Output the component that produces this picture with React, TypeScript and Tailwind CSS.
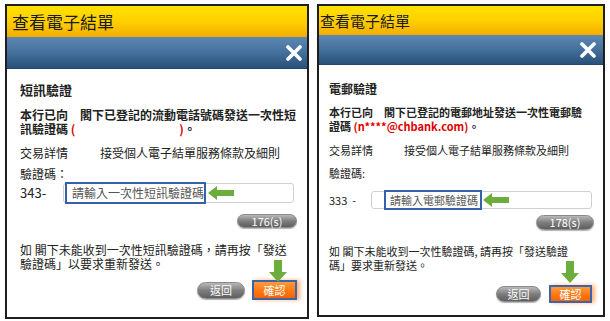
import React from "react";

const font = { fontFamily: '"Noto Sans CJK TC", "Noto Sans", sans-serif' };

function ArrowLeft({ className }: { className?: string }) {
  return (
    <svg className={className} viewBox="0 0 26 14" width="26" height="14">
      <polygon points="0,7 9,0 9,4 26,4 26,10 9,10 9,14" fill="#6cae3c" />
    </svg>
  );
}

function ArrowDown({ className }: { className?: string }) {
  return (
    <svg className={className} viewBox="0 0 18 22" width="18" height="22">
      <polygon points="5,0 13,0 13,12 18,12 9,22 0,12 5,12" fill="#6cae3c" />
    </svg>
  );
}

function CloseIcon() {
  return (
    <svg viewBox="0 0 18 16" width="18" height="16">
      <path d="M3 2 L15 14 M15 2 L3 14" stroke="#fff" strokeWidth="3.6" strokeLinecap="round" />
    </svg>
  );
}

interface PanelProps {
  width: string;
  height: string;
  headH: string;
  barH: string;
  titleCls: string;
  closePr: string;
  children: React.ReactNode;
}

function Panel({ width, height, headH, barH, titleCls, closePr, children }: PanelProps) {
  return (
    <div className={`${width} ${height} border-2 border-[#1e1e1e] bg-white flex flex-col overflow-hidden`}>
      <div className={`${headH} bg-gradient-to-b from-[#ffe100] via-[#ffd000] to-[#f2ad00] flex items-center`}>
        <span className={`${titleCls} text-[#1a1a1a]`}>查看電子結單</span>
      </div>
      <div className={`${barH} bg-gradient-to-b from-[#5d88b2] via-[#44709c] to-[#2a5178] border-b border-[#24466a] flex items-center justify-end ${closePr}`}>
        <CloseIcon />
      </div>
      {children}
    </div>
  );
}

function GrayPill({ label, cls }: { label: string; cls: string }) {
  return (
    <div
      className={`${cls} rounded-full bg-gradient-to-b from-[#b9b9b9] via-[#7e7e7e] to-[#5e5e5e] border border-[#8a8a8a] text-white flex items-center justify-center shadow-[0_1px_1px_rgba(0,0,0,0.3)]`}
    >
      {label}
    </div>
  );
}

function ConfirmBtn({ cls }: { cls: string }) {
  return (
    <div
      className={`${cls} bg-gradient-to-b from-[#ff9b3a] via-[#ff7a12] to-[#f56400] border-2 border-[#3c64ad] text-white flex items-center justify-center shadow-[3px_0_4px_rgba(255,120,20,0.55)]`}
    >
      確認
    </div>
  );
}

export default function App() {
  return (
    <div className="w-[610px] h-[321px] bg-white flex items-start pt-[4px] pl-[5px] gap-[8px]" style={font}>
      {/* SMS panel */}
      <Panel
        width="w-[304px]"
        height="h-[315px]"
        headH="h-[31px]"
        barH="h-[32px]"
        titleCls="pl-[5px] text-[17px] leading-none"
        closePr="pr-[4px]"
      >
        <div className="pl-[13px] pr-[9px] text-[12px] text-[#222]">
          <div className="mt-[13px] text-[13px] leading-[16px] font-bold">短訊驗證</div>
          <div className="mt-[10px] leading-[14px] font-bold">
            本行已向　閣下已登記的流動電話號碼發送一次性短
            <br />
            訊驗證碼
            <span className="text-[#e00000]"> (</span>
            <span className="inline-block w-[104px]" />
            <span className="text-[#e00000]">)</span>。
          </div>
          <div className="mt-[9px] leading-[16px] flex">
            <span className="w-[80px]">交易詳情</span>
            <span>接受個人電子結單服務條款及細則</span>
          </div>
          <div className="mt-[5px] leading-[16px]">驗證碼：</div>
          <div className="mt-[1px] flex items-center">
            <span className="w-[43px] text-[13px] leading-[20px]">343-</span>
            <div className="relative w-[231px] h-[20px] border border-[#d0d0d0] rounded-[3px] flex items-center">
              <div className="ml-[1px] h-[22px] w-[141px] border-2 border-[#3461a8] flex items-center pl-[5px] text-[#555]">
                請輸入一次性短訊驗證碼
              </div>
              <ArrowLeft className="ml-[2px]" />
            </div>
          </div>
          <div className="mt-[11px] flex justify-end pr-[1px]">
            <GrayPill label="176(s)" cls="w-[60px] h-[14px] text-[11px] leading-none" />
          </div>
          <div className="mt-[15px] leading-[14px]">
            如 閣下未能收到一次性短訊驗證碼，請再按「發送
            <br />
            驗證碼」以要求重新發送。
          </div>
          <div className="mt-[9px] flex justify-end items-center gap-[7px] pr-[1px] relative">
            <ArrowDown className="absolute right-[11px] -top-[20px]" />
            <GrayPill label="返回" cls="w-[48px] h-[17px] text-[11px] leading-none" />
            <ConfirmBtn cls="w-[45px] h-[20px] text-[11px] leading-none" />
          </div>
        </div>
      </Panel>

      {/* Email panel */}
      <Panel
        width="w-[288px]"
        height="h-[313px]"
        headH="h-[29px]"
        barH="h-[30px]"
        titleCls="pl-[1px] text-[15px] leading-none"
        closePr="pr-[6px]"
      >
        <div className="pl-[10px] pr-[8px] text-[11px] text-[#222]">
          <div className="mt-[16px] text-[12px] leading-[15px] font-bold">電郵驗證</div>
          <div className="mt-[9px] leading-[14px] font-bold">
            本行已向　閣下已登記的電郵地址發送一次性電郵驗
            <br />
            證碼 <span className="text-[#e00000]">(n****@chbank.com)</span>。
          </div>
          <div className="mt-[10px] leading-[15px] flex">
            <span className="w-[75px]">交易詳情</span>
            <span>接受個人電子結單服務條款及細則</span>
          </div>
          <div className="mt-[8px] leading-[15px]">驗證碼:</div>
          <div className="mt-[10px] flex items-center">
            <span className="w-[42px] leading-[18px]">333&nbsp; -</span>
            <div className="relative w-[221px] h-[18px] border border-[#d0d0d0] rounded-[3px] flex items-center">
              <div className="ml-[12px] h-[20px] w-[98px] border-2 border-[#3461a8] flex items-center pl-[4px] text-[#555]">
                請輸入電郵驗證碼
              </div>
              <ArrowLeft className="ml-[1px]" />
            </div>
          </div>
          <div className="mt-[6px] flex justify-end pr-[1px]">
            <GrayPill label="178(s)" cls="w-[58px] h-[15px] text-[11px] leading-none" />
          </div>
          <div className="mt-[14px] leading-[14px]">
            如 閣下未能收到一次性驗證碼, 請再按「發送驗證
            <br />
            碼」要求重新發送。
          </div>
          <div className="mt-[13px] flex justify-end items-center gap-[8px] pr-[3px] relative">
            <ArrowDown className="absolute right-[16px] -top-[24px]" />
            <GrayPill label="返回" cls="w-[45px] h-[16px] text-[11px] leading-none" />
            <ConfirmBtn cls="w-[43px] h-[18px] text-[11px] leading-none" />
          </div>
        </div>
      </Panel>
    </div>
  );
}
